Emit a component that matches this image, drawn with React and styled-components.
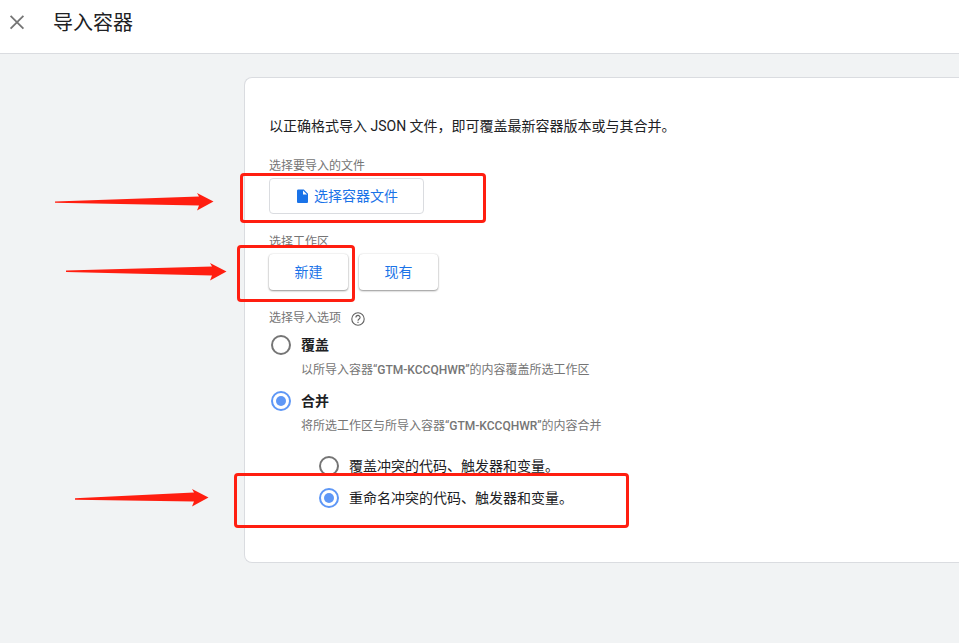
import React, { useState } from 'react';
import styled, { createGlobalStyle } from 'styled-components'

const GlobalStyle = createGlobalStyle`
  * {
    box-sizing: border-box;
  }

  body {
    margin: 0;
    background-color: #f1f3f4;
    color: #202124;
    font-family: Roboto, "Noto Sans CJK SC", sans-serif;
    font-size: 14px;
    line-height: 20px;
  }
`

const Page = styled.div`
  position: relative;
  min-height: 100vh;
  overflow: hidden;
`

const Header = styled.header`
  display: flex;
  align-items: center;
  gap: 24px;
  padding: 8px 5px 15px;
  background-color: #fff;
  border-bottom: 1px solid #dadce0;

  h1 {
    margin: 0;
    font-size: 20px;
    font-weight: 400;
    line-height: 30px;
  }
`

const CloseButton = styled.button`
  display: flex;
  padding: 0;
  border: 0;
  background: none;
  color: #757575;
  cursor: pointer;
`

const Main = styled.main`
  padding: 23px 0 80px 244px;
`

const Card = styled.section`
  padding: 38px 24px 54px;
  background-color: #fff;
  border: 1px solid #dadce0;
  border-right: 0;
  border-radius: 8px 0 0 8px;
`

const Intro = styled.p`
  margin: 0 0 22px;
`

const Field = styled.fieldset`
  margin: 0 0 20px;
  padding: 0;
  border: 0;

  &:last-child {
    margin: 0;
  }
`

const FieldTitle = styled.legend`
  display: flex;
  align-items: center;
  gap: 10px;
  margin-bottom: 4px;
  padding: 0;
  color: #757575;
  font-size: 12px;
  line-height: 16px;
`

const ButtonRow = styled.div`
  display: flex;
  gap: 11px;
`

const Button = styled.button`
  display: flex;
  align-items: center;
  justify-content: center;
  gap: 3px;
  height: 36px;
  min-width: 79px;
  padding: 0 25px;
  border: ${props => props.$outlined ? '1px solid #dadce0' : '0'};
  border-radius: 4px;
  background-color: #fff;
  box-shadow: ${props => props.$outlined ? 'none' : '0 1px 2px rgba(0, 0, 0, 0.4), 0 0 2px rgba(0, 0, 0, 0.12)'};
  color: #1a73e8;
  font: inherit;
  cursor: pointer;
`

const HelpButton = styled.button`
  display: flex;
  padding: 2px 0 0;
  border: 0;
  background: none;
  color: #616161;
  cursor: help;
`

const Options = styled.div`
  display: flex;
  flex-direction: column;
  gap: 13px;
  padding: 5px 0 0 2px;
`

const SubOptions = styled.div`
  display: flex;
  flex-direction: column;
  gap: 12px;
  padding: 22px 0 0 50px;
`

const RadioLabel = styled.label`
  display: flex;
  align-items: center;
  gap: 10px;
  font-weight: ${props => props.$strong ? 700 : 400};
  cursor: pointer;
`

const Radio = styled.input.attrs({ type: 'radio' })`
  appearance: none;
  flex: none;
  width: 20px;
  height: 20px;
  margin: 0;
  padding: 3px;
  border: 2px solid #757575;
  border-radius: 50%;

  &:checked {
    border-color: #5e97f6;
    background: #5e97f6 content-box;
  }
`

const Description = styled.p`
  margin: 7px 0 0 30px;
  color: #757575;
  font-size: 12px;
  line-height: 16px;

  b {
    font-weight: 500;
  }
`

const Annotations = styled.div`
  position: absolute;
  inset: 0;
  pointer-events: none;
`

const Highlight = styled.div`
  position: absolute;
  left: ${props => props.$x}px;
  top: ${props => props.$y}px;
  width: ${props => props.$w}px;
  height: ${props => props.$h}px;
  border: 3px solid #ff1e10;
  border-radius: 4px;
`

const Arrows = styled.svg`
  position: absolute;
  left: 0;
  top: 0;
  fill: #ff1e10;
`

const container = 'GTM-KCCQHWR'

const importOptions = [
  { value: 'overwrite', name: '覆盖', before: '以所导入容器“', after: '”的内容覆盖所选工作区' },
  { value: 'merge', name: '合并', before: '将所选工作区与所导入容器“', after: '”的内容合并' },
]

const conflictOptions = [
  { value: 'overwrite', name: '覆盖冲突的代码、触发器和变量。' },
  { value: 'rename', name: '重命名冲突的代码、触发器和变量。' },
]

const CloseIcon = () => (
  <svg width="24" height="24" viewBox="0 0 24 24" fill="none" stroke="currentColor" strokeWidth="1.8">
    <path d="M5.6 4.8 18.400 17.600M18.400 4.800 5.600 17.600" />
  </svg>
)

const FileIcon = () => (
  <svg width="16" height="16" viewBox="0 0 16 16" fill="currentColor">
    <path d="M3.300 1.500c-.8 0-1.300.6-1.300 1.300v10.900c0 .8.6 1.300 1.300 1.300h8.400c.8 0 1.300-.6 1.300-1.300V5.700L8.800 1.500zM8 6.500v-4l4 4z" />
  </svg>
)

const HelpIcon = () => (
  <svg width="14" height="14" viewBox="0 0 14 14" fill="none" stroke="currentColor" strokeWidth="1.100">
    <circle cx="7" cy="7" r="6.200" />
    <path d="M4.900 5.500a2.100 2.100 0 0 1 4.200 0c0 1.400-2.100 1.600-2.100 3.200M7 9.700v1.300" />
  </svg>
)

export default function App() {
  const [option, setOption] = useState('merge')
  const [conflict, setConflict] = useState('rename')

  return (
    <Page>
      <GlobalStyle />

      <Header>
        <CloseButton aria-label="关闭"><CloseIcon /></CloseButton>
        <h1>导入容器</h1>
      </Header>

      <Main>
        <Card>
          <Intro>以正确格式导入 JSON 文件，即可覆盖最新容器版本或与其合并。</Intro>

          <Field>
            <FieldTitle>选择要导入的文件</FieldTitle>
            <ButtonRow>
              <Button type="button" $outlined><FileIcon />选择容器文件</Button>
            </ButtonRow>
          </Field>

          <Field>
            <FieldTitle>选择工作区</FieldTitle>
            <ButtonRow>
              <Button type="button">新建</Button>
              <Button type="button">现有</Button>
            </ButtonRow>
          </Field>

          <Field>
            <FieldTitle>
              选择导入选项
              <HelpButton type="button" aria-label="帮助"><HelpIcon /></HelpButton>
            </FieldTitle>
            <Options>
              {importOptions.map((item) => (
                <div key={item.value}>
                  <RadioLabel $strong>
                    <Radio name="option" checked={option === item.value} onChange={() => setOption(item.value)} />
                    {item.name}
                  </RadioLabel>
                  <Description>{item.before}<b>{container}</b>{item.after}</Description>
                </div>
              ))}
            </Options>
            <SubOptions>
              {conflictOptions.map((item) => (
                <RadioLabel key={item.value}>
                  <Radio name="conflict" checked={conflict === item.value} onChange={() => setConflict(item.value)} />
                  {item.name}
                </RadioLabel>
              ))}
            </SubOptions>
          </Field>
        </Card>
      </Main>

      <Annotations>
        <Highlight $x={240} $y={173} $w={246} $h={50} />
        <Highlight $x={237} $y={245} $w={118} $h={57} />
        <Highlight $x={234} $y={473} $w={395} $h={55} />
        <Arrows width="234" height="520" aria-hidden="true">
          <path d="M55 201.400 199 196.500 197 193 213.500 201.500 197 210.500 199 205.500 55 202.800Z" />
          <path d="M66 270.500 212 266.500 210 263 226.500 271.500 210 280.500 212 275.500 66 271.900Z" />
          <path d="M75 498.300 194 492.500 192 489 208.500 497.500 192 506.500 194 501.500 75 499.700Z" />
        </Arrows>
      </Annotations>
    </Page>
  )
}
